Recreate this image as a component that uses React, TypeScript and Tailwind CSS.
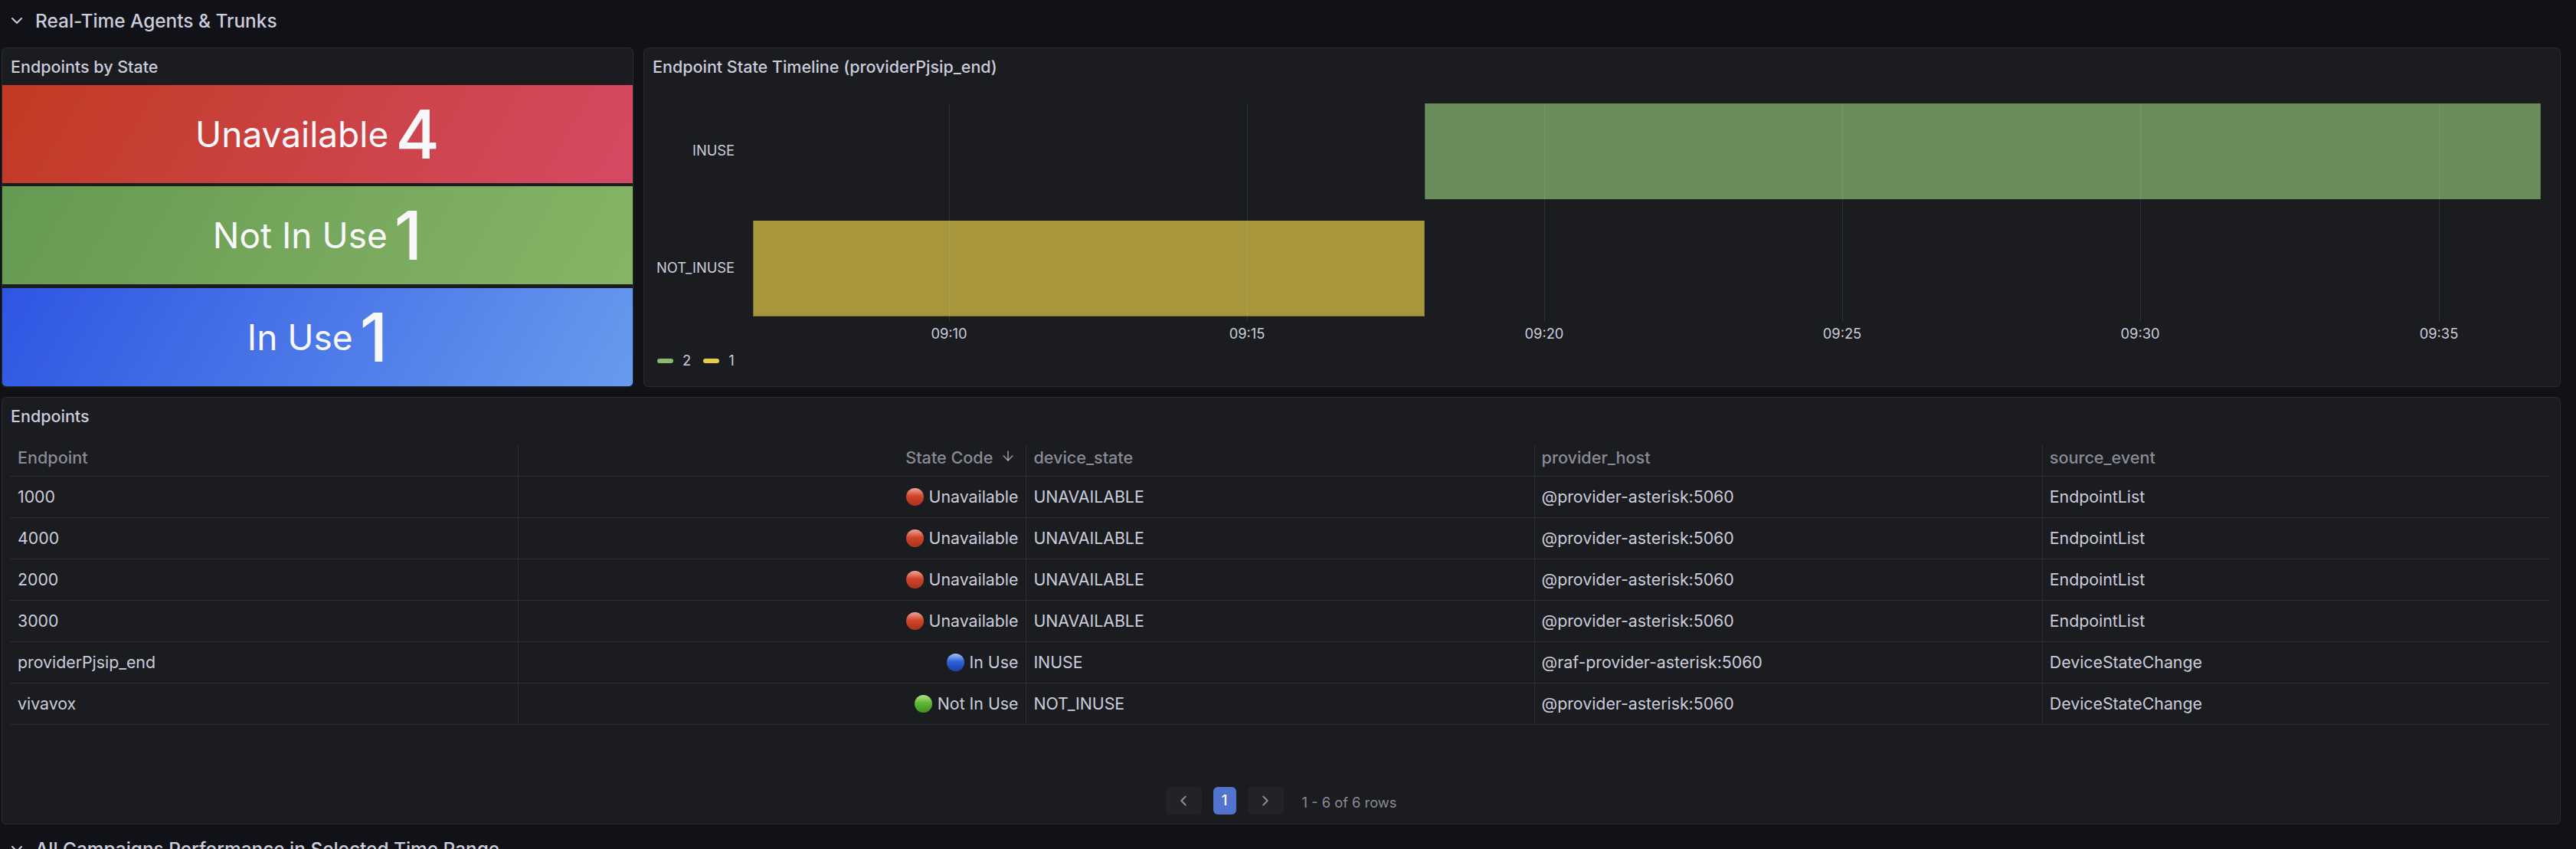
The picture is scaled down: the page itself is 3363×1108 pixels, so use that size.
import React from 'react';
import { ArrowDown, ChevronDown, ChevronLeft, ChevronRight } from 'lucide-react';

type Tone = 'red' | 'blue' | 'green';

interface Row {
  endpoint: string;
  tone: Tone;
  code: string;
  state: string;
  host: string;
  event: string;
}

const rows: Row[] = [
  { endpoint: '1000', tone: 'red', code: 'Unavailable', state: 'UNAVAILABLE', host: '@provider-asterisk:5060', event: 'EndpointList' },
  { endpoint: '4000', tone: 'red', code: 'Unavailable', state: 'UNAVAILABLE', host: '@provider-asterisk:5060', event: 'EndpointList' },
  { endpoint: '2000', tone: 'red', code: 'Unavailable', state: 'UNAVAILABLE', host: '@provider-asterisk:5060', event: 'EndpointList' },
  { endpoint: '3000', tone: 'red', code: 'Unavailable', state: 'UNAVAILABLE', host: '@provider-asterisk:5060', event: 'EndpointList' },
  { endpoint: 'providerPjsip_end', tone: 'blue', code: 'In Use', state: 'INUSE', host: '@raf-provider-asterisk:5060', event: 'DeviceStateChange' },
  { endpoint: 'vivavox', tone: 'green', code: 'Not In Use', state: 'NOT_INUSE', host: '@provider-asterisk:5060', event: 'DeviceStateChange' },
];

const ticks = [
  { label: '09:10', left: 'left-[256px]' },
  { label: '09:15', left: 'left-[645px]' },
  { label: '09:20', left: 'left-[1033px]' },
  { label: '09:25', left: 'left-[1422px]' },
  { label: '09:30', left: 'left-[1811px]' },
  { label: '09:35', left: 'left-[2201px]' },
];

const dotColors: Record<Tone, string[]> = {
  red: ['#f2a79a', '#d1452c', '#a8321c'],
  blue: ['#a5c4f5', '#2f63d6', '#1c3fa8'],
  green: ['#b5e58c', '#62b534', '#3f8f20'],
};

const Dot = ({ tone }: { tone: Tone }) => {
  const [top, mid, bottom] = dotColors[tone];
  return (
    <svg width="23" height="23" viewBox="0 0 23 23" className="shrink-0">
      <defs>
        <linearGradient id={`dot-${tone}`} x1="0" y1="0" x2="0" y2="1">
          <stop offset="0" stopColor={top} />
          <stop offset="0.45" stopColor={mid} />
          <stop offset="1" stopColor={bottom} />
        </linearGradient>
      </defs>
      <circle cx="11.5" cy="11.5" r="11.5" fill={`url(#dot-${tone})`} />
    </svg>
  );
};

const StatTile = ({ label, value, gradient }: { label: string; value: string; gradient: string }) => (
  <div className={`h-[128px] flex items-center justify-center gap-[9px] text-[#f8f8fb] ${gradient}`}>
    <span className="text-[46px] leading-none font-normal">{label}</span>
    <span className="text-[88px] leading-none font-medium">{value}</span>
  </div>
);

const RowTitle = ({ title, className = '' }: { title: string; className?: string }) => (
  <div className={`h-[54px] flex items-center pl-[8px] gap-[12px] text-[24.4px] font-medium text-[#ccccdc] shrink-0 ${className}`}>
    <ChevronDown size={24} strokeWidth={2} />
    <span>{title}</span>
  </div>
);

const App = () => {
  return (
    <div className="h-screen overflow-hidden bg-[#111217] pl-[2px] pr-[20px] text-[#ccccdc] font-['Inter',sans-serif]">
      <RowTitle title="Real-Time Agents & Trunks" className="mb-[8px]" />

      <div className="flex gap-[13px] h-[443px]">
        <div className="w-[825px] bg-[#1a1c20] border border-[#2a2c31] rounded-[6px] overflow-hidden flex flex-col">
          <div className="h-[48px] flex items-center px-[11px] text-[21.5px] font-medium">Endpoints by State</div>
          <div className="flex flex-col gap-[4px]">
            <StatTile label="Unavailable" value="4" gradient="bg-[linear-gradient(120deg,#c23a22,#d44a64)]" />
            <StatTile label="Not In Use" value="1" gradient="bg-[linear-gradient(120deg,#659a52,#87b567)]" />
            <StatTile label="In Use" value="1" gradient="mt-[1px] bg-[linear-gradient(120deg,#2f55e3,#689bee)]" />
          </div>
        </div>

        <div className="flex-1 bg-[#1a1c20] border border-[#2a2c31] rounded-[6px] flex flex-col">
          <div className="h-[48px] flex items-center px-[11px] text-[21.5px] font-medium">Endpoint State Timeline (providerPjsip_end)</div>
          <div className="flex flex-1">
            <div className="w-[118px] mr-[24px] relative text-[18.3px] text-right">
              <div className="absolute right-0 top-[72px]">INUSE</div>
              <div className="absolute right-0 top-[225px] whitespace-nowrap">NOT_INUSE</div>
            </div>
            <div className="relative w-[2334px] mt-[24px]">
              <div className="absolute left-0 top-[153px] w-[877px] h-[125px] bg-[#a8963c] border-x border-b border-[#7d7033]" />
              <div className="absolute left-[877px] top-0 w-[1457px] h-[125px] bg-[#6a8d5b] border-x border-[#55724a]" />
              {ticks.map((t) => (
                <React.Fragment key={t.label}>
                  <div className={`absolute top-0 h-[284px] w-px bg-[#f0faff17] ${t.left}`} />
                  <div className={`absolute top-[287px] -translate-x-1/2 text-[18.3px] ${t.left}`}>{t.label}</div>
                </React.Fragment>
              ))}
            </div>
          </div>
          <div className="h-[47px] flex items-start text-[18.3px] pl-[17px]">
            <span className="w-[21px] h-[6px] rounded-full bg-[#8ab971] mt-[11px]" />
            <span className="ml-[12px]">2</span>
            <span className="w-[21px] h-[6px] rounded-full bg-[#e8cd4a] mt-[11px] ml-[16px]" />
            <span className="ml-[12px]">1</span>
          </div>
        </div>
      </div>

      <div className="mt-[13px] h-[558px] bg-[#1a1c20] border border-[#2a2c31] rounded-[6px] flex flex-col">
        <div className="h-[48px] flex items-center px-[11px] text-[21.5px] font-medium">Endpoints</div>
        <div className="ml-[10px] mr-[13px] mt-[14px] text-[21.3px]">
          <div className="grid grid-cols-5 h-[41px] border-b border-[#2d2f34] text-[#ccccdca6] font-medium text-[21.6px]">
            <div className="pl-[10px]">Endpoint</div>
            <div className="pl-[9px] pr-[13px] border-l border-[#2d2f34] flex justify-end gap-[10px] items-start">
              State Code
              <ArrowDown size={20} className="mt-[4px]" />
            </div>
            <div className="pl-[9px] border-l border-[#2d2f34]">device_state</div>
            <div className="pl-[9px] border-l border-[#2d2f34]">provider_host</div>
            <div className="pl-[9px] border-l border-[#2d2f34]">source_event</div>
          </div>
          {rows.map((row, i) => (
            <div key={i} className="grid grid-cols-5 h-[54px] border-b border-[#2d2f34] items-stretch">
              <div className="pl-[10px] flex items-center">{row.endpoint}</div>
              <div className="pl-[9px] pr-[10px] border-l border-[#2d2f34] flex items-center justify-end gap-[7px]">
                <Dot tone={row.tone} />
                {row.code}
              </div>
              <div className="pl-[9px] border-l border-[#2d2f34] flex items-center">{row.state}</div>
              <div className="pl-[9px] border-l border-[#2d2f34] flex items-center">{row.host}</div>
              <div className="pl-[9px] border-l border-[#2d2f34] flex items-center">{row.event}</div>
            </div>
          ))}
        </div>
        <div className="mt-auto mb-[12px] flex items-center justify-center gap-[15px] text-[18.3px] text-[#ccccdca6]">
          <button className="w-[47px] h-[36px] rounded-[6px] bg-[#212327] flex items-center justify-center">
            <ChevronLeft size={22} />
          </button>
          <button className="w-[30px] h-[36px] rounded-[6px] bg-[#5274cf] text-white font-medium">1</button>
          <button className="w-[47px] h-[36px] rounded-[6px] bg-[#212327] flex items-center justify-center">
            <ChevronRight size={22} />
          </button>
          <span className="ml-[9px] mt-[6px]">1 - 6 of 6 rows</span>
        </div>
      </div>

      <RowTitle title="All Campaigns Performance in Selected Time Range" className="mt-[5px]" />
    </div>
  );
};

export default App;
